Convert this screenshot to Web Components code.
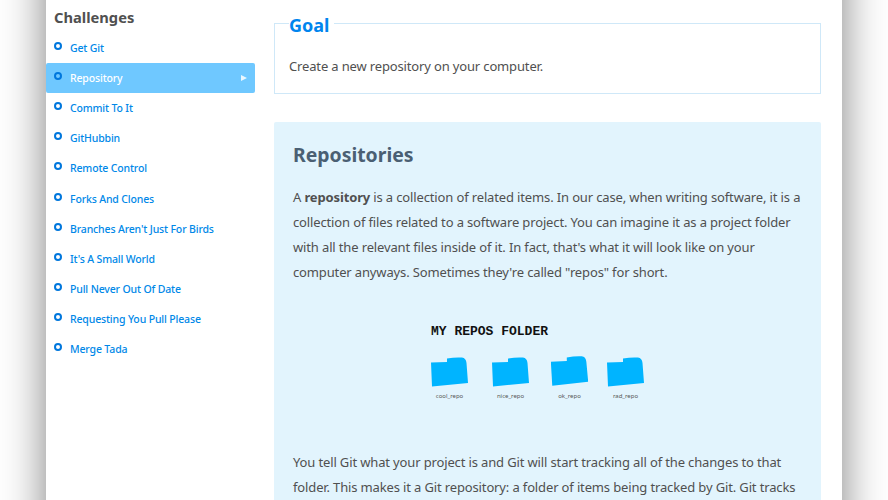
<!doctype html>
<html>
<head>
<meta charset="utf-8">
<title>Repository</title>
<style>
  html, body { margin: 0; height: 500px; overflow: hidden; background: #fff; }
  body { font-family: "Noto Sans", sans-serif; color: #505050; }
</style>
</head>
<body>
<app-page>
  <challenge-list slot="side" heading="Challenges">
    <challenge-item>Get Git</challenge-item>
    <challenge-item active>Repository</challenge-item>
    <challenge-item>Commit To It</challenge-item>
    <challenge-item>GitHubbin</challenge-item>
    <challenge-item>Remote Control</challenge-item>
    <challenge-item>Forks And Clones</challenge-item>
    <challenge-item>Branches Aren't Just For Birds</challenge-item>
    <challenge-item>It's A Small World</challenge-item>
    <challenge-item>Pull Never Out Of Date</challenge-item>
    <challenge-item>Requesting You Pull Please</challenge-item>
    <challenge-item>Merge Tada</challenge-item>
  </challenge-list>
  <goal-box heading="Goal">Create a new repository on your computer.</goal-box>
  <lesson-panel heading="Repositories">
    <p>A <b>repository</b> is a collection of related items. In our case, when writing software, it is a<br>collection of files related to a software project. You can imagine it as a project folder<br>with all the relevant files inside of it. In fact, that's what it will look like on your<br>computer anyways. Sometimes they're called "repos" for short.</p>
    <repo-figure heading="MY REPOS FOLDER">
      <repo-folder name="cool_repo"></repo-folder>
      <repo-folder name="nice_repo" style="margin-left:24px"></repo-folder>
      <repo-folder name="ok_repo" tilt="-1" lift="1" style="margin-left:22px"></repo-folder>
      <repo-folder name="rad_repo" style="margin-left:19px"></repo-folder>
    </repo-figure>
    <p>You tell Git what your project is and Git will start tracking all of the changes to that<br>folder. This makes it a Git repository: a folder of items being tracked by Git. Git tracks</p>
  </lesson-panel>
</app-page>

<script>
// every element just sets its shadow root in the constructor
class AppPage extends HTMLElement {
  constructor() {
    super();
    this.attachShadow({ mode: 'open' });
    this.shadowRoot.innerHTML = `
      <style>
        :host {
          display: grid;
          grid-template-columns: 209px 547px;
          column-gap: 19px;
          align-items: start;
          width: 796px;
          height: 700px;
          margin: -50px 46px 0;
          padding-top: 50px;
          box-sizing: border-box;
          background: #fff;
          box-shadow: 0 0 42px rgba(0,0,0,.5);
        }
        .main { display: flex; flex-direction: column; gap: 28px; padding-top: 14px; }
      </style>
      <slot name="side"></slot>
      <div class="main"><slot></slot></div>
    `;
  }
}

class ChallengeList extends HTMLElement {
  constructor() {
    super();
    this.attachShadow({ mode: 'open' });
    this.shadowRoot.innerHTML = `
      <style>
        :host { display: block; padding-top: 5px; }
        h2 { margin: 0 0 4px 8px; font-size: 14.7px; line-height: 24px; font-weight: 700; color: #505050; }
      </style>
      <h2>${this.getAttribute('heading')}</h2>
      <slot></slot>
    `;
  }
}

class ChallengeItem extends HTMLElement {
  constructor() {
    super();
    this.attachShadow({ mode: 'open' });
    this.shadowRoot.innerHTML = `
      <style>
        :host {
          display: flex;
          align-items: center;
          height: 30.1px;
          padding: 0 8px;
          border-radius: 2px;
          font-size: 10.5px;
          letter-spacing: -.15px;
          font-weight: 500;
          color: #0088e8;
        }
        :host([active]) { background: #6fc8ff; color: #fff; }
        .dot {
          width: 4px; height: 4px;
          margin: -4px 8px 0 0;
          border: 2px solid #0077dd;
          border-radius: 50%;
          flex: none;
        }
        .arrow {
          display: none;
          margin-left: auto;
          border-left: 6px solid rgba(255,255,255,.85);
          border-top: 3.5px solid transparent;
          border-bottom: 3.5px solid transparent;
        }
        :host([active]) .arrow { display: block; }
      </style>
      <span class="dot"></span>
      <slot></slot>
      <span class="arrow"></span>
    `;
  }
}

class GoalBox extends HTMLElement {
  constructor() {
    super();
    this.attachShadow({ mode: 'open' });
    this.shadowRoot.innerHTML = `
      <style>
        :host {
          display: block;
          height: 71px;
          border: 1px solid #cfe8f8;
          padding: 0 15px 0 14px;
          box-sizing: border-box;
          margin-top: 9px;
        }
        h2 {
          display: inline-block;
          margin: -13px 0 0 0;
          padding: 0 5px 0 0;
          background: #fff;
          font-size: 18px;
          line-height: 28px;
          font-weight: 700;
          color: #0085ee;
          vertical-align: top;
        }
        p { margin: 8px 0 0; font-size: 13px; letter-spacing: -.15px; line-height: 24px; }
      </style>
      <h2>${this.getAttribute('heading')}</h2>
      <p><slot></slot></p>
    `;
  }
}

class LessonPanel extends HTMLElement {
  constructor() {
    super();
    this.attachShadow({ mode: 'open' });
    this.shadowRoot.innerHTML = `
      <style>
        :host {
          display: block;
          padding: 18px 19px 40px;
          border-radius: 2px;
          background: #e2f4fd;
          font-size: 13px;
          letter-spacing: -.14px;
          line-height: 25px;
          white-space: nowrap;
        }
        h2 { margin: 0 0 15px; font-size: 19.4px; letter-spacing: 0; line-height: 30px; font-weight: 700; color: #4a5f73; }
        ::slotted(p) { margin: 0; }
      </style>
      <h2>${this.getAttribute('heading')}</h2>
      <slot></slot>
    `;
  }
}

class RepoFigure extends HTMLElement {
  constructor() {
    super();
    this.attachShadow({ mode: 'open' });
    this.shadowRoot.innerHTML = `
      <style>
        :host { display: block; padding: 37px 0 49px 138px; letter-spacing: 0; }
        h3 {
          margin: 0 0 15px;
          font: 700 13px/20px "Liberation Mono", monospace;
          color: #111;
        }
        .row { display: flex; }
      </style>
      <h3>${this.getAttribute('heading')}</h3>
      <div class="row"><slot></slot></div>
    `;
  }
}

class RepoFolder extends HTMLElement {
  constructor() {
    super();
    this.attachShadow({ mode: 'open' });
    const tilt = this.getAttribute('tilt') || 0;
    const lift = this.getAttribute('lift') || 0;
    this.shadowRoot.innerHTML = `
      <style>
        :host { display: flex; flex-direction: column; align-items: center; width: 37px; }
        svg { display: block; transform: translateY(-${lift}px) rotate(${tilt}deg); }
        span { margin-top: 4px; font: 6px/10px "Noto Sans", sans-serif; color: #555; }
      </style>
      <svg width="37" height="30" viewBox="0 0 37 30">
        <path fill="#00b4ff" d="M0 5.5 L16 5 L16 1.5 Q24 0 31 .5 Q35 1 35.5 6 L37 26 L1 29.5 Z"/>
      </svg>
      <span>${this.getAttribute('name')}</span>
    `;
  }
}

customElements.define('app-page', AppPage);
customElements.define('challenge-list', ChallengeList);
customElements.define('challenge-item', ChallengeItem);
customElements.define('goal-box', GoalBox);
customElements.define('lesson-panel', LessonPanel);
customElements.define('repo-figure', RepoFigure);
customElements.define('repo-folder', RepoFolder);
</script>
</body>
</html>
